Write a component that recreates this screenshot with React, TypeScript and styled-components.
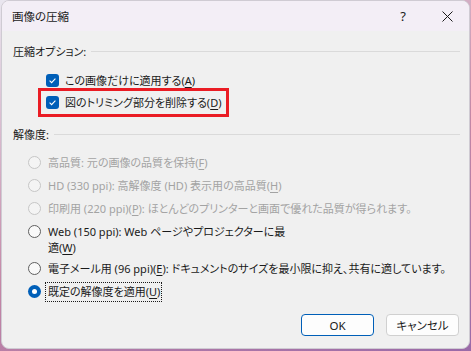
import React from "react";
import styled, { createGlobalStyle, css } from "styled-components";

const GlobalStyle = createGlobalStyle`
  html, body {
    margin: 0;
    padding: 0;
  }
  body {
    width: 471px;
    height: 351px;
    overflow: hidden;
    background: linear-gradient(160deg, #e9e6ef 0%, #c487a6 55%, #9a6aa8 100%);
    font-family: "Noto Sans", "Noto Sans CJK JP", sans-serif;
    font-feature-settings: "palt" 1;
    font-size: 11px;
    color: #1a1a1a;
  }
`;

const accent = "#005fb8";

const Window = styled.div`
  box-sizing: border-box;
  margin-left: 1px;
  width: 469px;
  height: 349px;
  display: flex;
  flex-direction: column;
  background: #f0f0f0;
  border: 1px solid #cfcbd3;
  border-radius: 8px;
  overflow: hidden;
`;

const TitleBar = styled.div`
  height: 30px;
  flex: none;
  display: flex;
  align-items: center;
  padding-left: 10px;
  background: #f3eef6;
`;

const Title = styled.div`
  flex: 1;
  font-size: 11.5px;
`;

const CaptionButton = styled.div`
  width: 44px;
  height: 30px;
  display: flex;
  align-items: center;
  justify-content: center;
  font-size: 13px;
`;

const Content = styled.div`
  flex: 1;
  display: flex;
  flex-direction: column;
  padding: 0 9px 0 11px;
`;

const GroupHeader = styled.div<{ $top: number }>`
  display: flex;
  align-items: center;
  height: 18px;
  margin-top: ${(p) => p.$top}px;
  white-space: nowrap;

  &::after {
    content: "";
    flex: 1;
    height: 1px;
    margin-left: 5px;
    background: #dadada;
  }
`;

const CheckList = styled.div`
  display: flex;
  flex-direction: column;
  margin-top: 9px;
  padding-left: 33px;
`;

const CheckRow = styled.div<{ $marked?: boolean }>`
  position: relative;
  display: flex;
  align-items: center;
  gap: 6px;
  height: 22px;
  align-self: flex-start;
  white-space: nowrap;

  ${(p) =>
    p.$marked &&
    css`
      &::after {
        content: "";
        position: absolute;
        left: -8px;
        right: -7px;
        top: -3px;
        bottom: -4px;
        border: 3px solid #ea1c24;
      }
    `}
`;

const Box = styled.span`
  width: 13px;
  height: 13px;
  border-radius: 3px;
  background: ${accent};
  display: flex;
  align-items: center;
  justify-content: center;
`;

const RadioList = styled.div`
  display: flex;
  flex-direction: column;
  margin-top: 8px;
  padding-left: 15px;
`;

const RadioRow = styled.div<{ $disabled?: boolean; $tail?: number }>`
  display: flex;
  align-items: flex-start;
  gap: 7px;
  padding: 3.5px 0 ${(p) => p.$tail ?? 3.5}px;
  line-height: 16px;
  white-space: nowrap;
  color: ${(p) => (p.$disabled ? "#a3a3a3" : "#1a1a1a")};
`;

const Circle = styled.span<{ $state: "off" | "disabled" | "on" }>`
  box-sizing: border-box;
  flex: none;
  width: 13px;
  height: 13px;
  margin-top: 1.5px;
  border-radius: 50%;
  display: flex;
  align-items: center;
  justify-content: center;
  ${(p) =>
    p.$state === "disabled"
      ? css`
          border: 1px solid #c6c6c6;
          background: #f4f4f4;
        `
      : p.$state === "off"
      ? css`
          border: 1px solid #5f5f5f;
          background: #f9f9f9;
        `
      : css`
          background: ${accent};
          &::after {
            content: "";
            width: 5px;
            height: 5px;
            border-radius: 50%;
            background: #fff;
          }
        `}
`;

const RadioLabel = styled.span<{ $focused?: boolean }>`
  ${(p) =>
    p.$focused &&
    css`
      margin: -2px 0 0 -3px;
      padding: 1px 1px 1px 2px;
      border: 1px dotted #1a1a1a;
    `}
`;

const Key = styled.span`
  text-decoration: underline;
  text-underline-offset: 2px;
`;

const Footer = styled.div`
  margin-top: auto;
  display: flex;
  justify-content: flex-end;
  gap: 12px;
  padding: 0 1px 12px 0;
`;

const Button = styled.button<{ $default?: boolean }>`
  box-sizing: border-box;
  width: 73px;
  height: 22px;
  padding: 0;
  font: inherit;
  font-size: 11.5px;
  font-feature-settings: "palt" 1;
  color: #1a1a1a;
  background: #fdfdfd;
  border-radius: 4px;
  border: 1px solid ${(p) => (p.$default ? accent : "#d0d0d0")};
`;

const Check = () => (
  <svg width="9" height="9" viewBox="0 0 9 9">
    <path d="M1.6 4.7 L3.6 6.6 L7.4 2.6" fill="none" stroke="#fff" strokeWidth="1.1" />
  </svg>
);

const CloseIcon = () => (
  <svg width="11" height="11" viewBox="0 0 11 11">
    <path d="M0.5 0.5 L10.5 10.5 M10.5 0.5 L0.5 10.5" stroke="#1a1a1a" strokeWidth="1" />
  </svg>
);

export default function App() {
  return (
    <>
      <GlobalStyle />
      <Window>
        <TitleBar>
          <Title>画像の圧縮</Title>
          <CaptionButton>?</CaptionButton>
          <CaptionButton>
            <CloseIcon />
          </CaptionButton>
        </TitleBar>
        <Content>
          <GroupHeader $top={11}>圧縮オプション:</GroupHeader>
          <CheckList>
            <CheckRow>
              <Box>
                <Check />
              </Box>
              <span>
                この画像だけに適用する(<Key>A</Key>)
              </span>
            </CheckRow>
            <CheckRow $marked>
              <Box>
                <Check />
              </Box>
              <span>
                図のトリミング部分を削除する(<Key>D</Key>)
              </span>
            </CheckRow>
          </CheckList>

          <GroupHeader $top={12}>解像度:</GroupHeader>
          <RadioList>
            <RadioRow $disabled>
              <Circle $state="disabled" />
              <RadioLabel>
                高品質: 元の画像の品質を保持(<Key>F</Key>)
              </RadioLabel>
            </RadioRow>
            <RadioRow $disabled>
              <Circle $state="disabled" />
              <RadioLabel>
                HD (330 ppi): 高解像度 (HD) 表示用の高品質(<Key>H</Key>)
              </RadioLabel>
            </RadioRow>
            <RadioRow $disabled>
              <Circle $state="disabled" />
              <RadioLabel>
                印刷用 (220 ppi)(<Key>P</Key>): ほとんどのプリンターと画面で優れた品質が得られます。
              </RadioLabel>
            </RadioRow>
            <RadioRow $tail={1.5}>
              <Circle $state="off" />
              <RadioLabel>
                Web (150 ppi): Web ページやプロジェクターに最
                <br />
                適(<Key>W</Key>)
              </RadioLabel>
            </RadioRow>
            <RadioRow>
              <Circle $state="off" />
              <RadioLabel>
                電子メール用 (96 ppi)(<Key>E</Key>): ドキュメントのサイズを最小限に抑え、共有に適しています。
              </RadioLabel>
            </RadioRow>
            <RadioRow>
              <Circle $state="on" />
              <RadioLabel $focused>
                既定の解像度を適用(<Key>U</Key>)
              </RadioLabel>
            </RadioRow>
          </RadioList>

          <Footer>
            <Button $default>OK</Button>
            <Button>キャンセル</Button>
          </Footer>
        </Content>
      </Window>
    </>
  );
}
